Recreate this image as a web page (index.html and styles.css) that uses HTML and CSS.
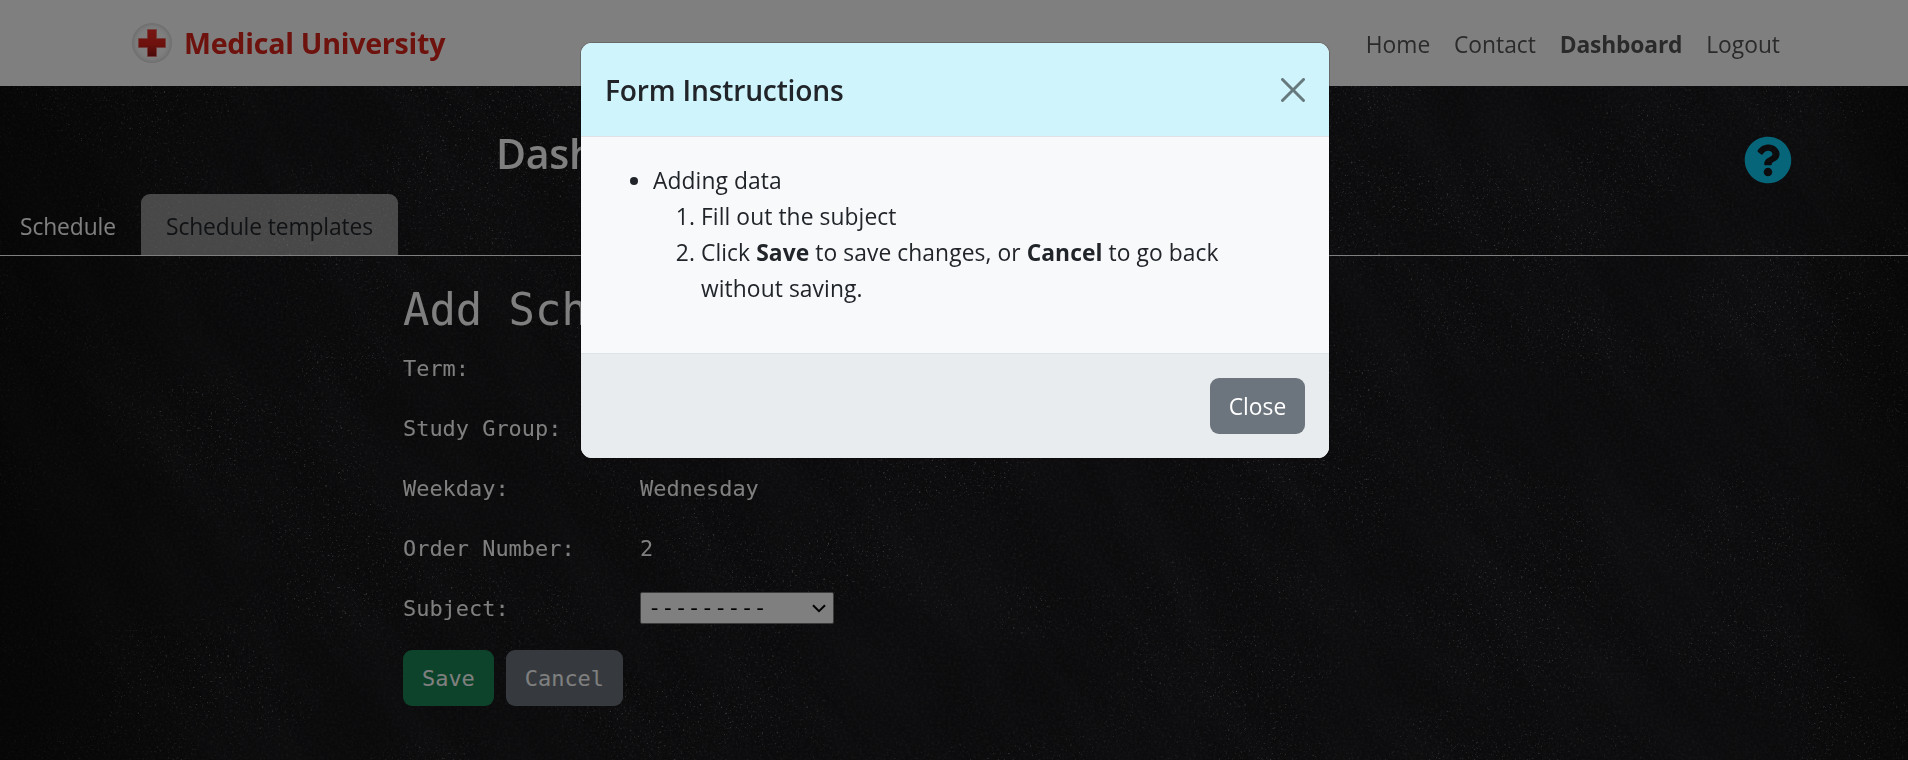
FILE: index.html
```
<!DOCTYPE html>
<html lang="en">
<head>
<meta charset="utf-8">
<title>Medical University</title>
<link rel="stylesheet" href="styles.css">
</head>
<body>
<svg class="chalkboard" width="1908" height="760" aria-hidden="true">
  <filter id="specks" x="0" y="0" width="100%" height="100%" color-interpolation-filters="sRGB">
    <feTurbulence type="fractalNoise" baseFrequency="0.47" numOctaves="3" seed="7" result="fine"/>
    <feColorMatrix in="fine" values="0 0 0 0 .75  0 0 0 0 .75  0 0 0 0 .78  4 0 0 0 -2.6" result="dots"/>
    <feTurbulence type="fractalNoise" baseFrequency="0.005 0.008" numOctaves="3" seed="12"/>
    <feColorMatrix values="0 0 0 0 1  0 0 0 0 1  0 0 0 0 1  3 0 0 0 -.9"/>
    <feComposite in="dots" operator="in"/>
  </filter>
  <filter id="grain" x="0" y="0" width="100%" height="100%" color-interpolation-filters="sRGB">
    <feTurbulence type="fractalNoise" baseFrequency="0.37" numOctaves="2" seed="3"/>
    <feColorMatrix values="0 0 0 0 .6  0 0 0 0 .6  0 0 0 0 .64  .5 0 0 0 -.19"/>
  </filter>
  <filter id="smudge" x="0" y="0" width="100%" height="100%" color-interpolation-filters="sRGB">
    <feTurbulence type="fractalNoise" baseFrequency="0.005 0.02" numOctaves="5" seed="21"/>
    <feColorMatrix values="0 0 0 0 .7  0 0 0 0 .7  0 0 0 0 .75  .35 0 0 0 -.12"/>
  </filter>
  <linearGradient id="edges"><stop offset="0" stop-opacity=".45"/><stop offset=".12" stop-opacity=".1"/><stop offset=".5" stop-opacity="0"/><stop offset=".94" stop-opacity="0"/><stop offset="1" stop-opacity=".35"/></linearGradient>
  <rect width="1908" height="760" filter="url(#grain)" opacity=".45"/>
  <rect width="1908" height="760" filter="url(#specks)" opacity=".6"/>
  <g transform="rotate(55 1400 380)"><rect x="300" y="-900" width="2000" height="2500" filter="url(#smudge)" opacity=".25"/></g>
  <rect width="1908" height="760" fill="url(#edges)"/>
</svg>
<div class="page">
  <nav class="navbar">
    <a class="brand">
      <svg class="logo" viewBox="0 0 40 40">
        <defs>
          <radialGradient id="disc"><stop offset=".6" stop-color="#fff" stop-opacity=".15"/><stop offset=".85" stop-color="#f2f2f2"/><stop offset="1" stop-color="#dcdcdc"/></radialGradient>
          <linearGradient id="cross" x2="0" y2="1"><stop offset="0" stop-color="#f02c28"/><stop offset=".55" stop-color="#dc241c"/><stop offset="1" stop-color="#901410"/></linearGradient>
        </defs>
        <circle cx="20" cy="20" r="20" fill="url(#disc)"/>
        <path d="M15.5 6.5h9v9h9v9h-9v9h-9v-9h-9v-9h9z" fill="url(#cross)" stroke="#e8756f" stroke-width=".7"/>
      </svg>
      <span class="brand-name">Medical University</span>
    </a>
    <div class="links">
      <a>Home</a><a>Contact</a><a class="current">Dashboard</a><a>Logout</a>
    </div>
  </nav>
  <header class="heading">
    <h2>Dashboard</h2>
    <svg class="help" viewBox="0 0 512 512"><path d="M504 256c0 136.997-111.043 248-248 248S8 392.997 8 256C8 119.083 119.043 8 256 8s248 111.083 248 248zM262.655 90c-54.497 0-89.255 22.957-116.549 63.758-3.536 5.286-2.353 12.415 2.715 16.258l34.699 26.31c5.205 3.947 12.621 3.008 16.665-2.122 17.864-22.658 30.113-35.797 57.303-35.797 20.429 0 45.698 13.148 45.698 32.958 0 14.976-12.363 22.667-32.534 33.976C247.128 238.528 216 254.941 216 296v4c0 6.627 5.373 12 12 12h56c6.627 0 12-5.373 12-12v-1.333c0-28.462 83.186-29.647 83.186-106.667 0-58.002-60.165-102-116.531-102zM256 338c-25.365 0-46 20.635-46 46 0 25.364 20.635 46 46 46s46-20.636 46-46c0-25.364-20.635-46-46-46z"/></svg>
  </header>
  <div class="tabs">
    <a class="tab">Schedule</a>
    <a class="tab active">Schedule templates</a>
  </div>
  <main class="form">
    <h1>Add Schedule</h1>
    <div class="row"><span>Term:</span></div>
    <div class="row"><span>Study Group:</span></div>
    <div class="row"><span>Weekday:</span><span>Wednesday</span></div>
    <div class="row"><span>Order Number:</span><span>2</span></div>
    <div class="row"><span>Subject:</span>
      <div class="select"><span>---------</span><svg viewBox="0 0 14 9"><path d="M1 1.2l6 6 6-6"/></svg></div>
    </div>
    <div class="actions"><button class="btn save">Save</button><button class="btn secondary">Cancel</button></div>
  </main>
</div>
<div class="backdrop">
  <section class="modal">
    <div class="modal-header">
      <h5>Form Instructions</h5>
      <svg class="close" viewBox="0 0 16 16"><path d="M.293.293a1 1 0 011.414 0L8 6.586 14.293.293a1 1 0 111.414 1.414L9.414 8l6.293 6.293a1 1 0 01-1.414 1.414L8 9.414l-6.293 6.293a1 1 0 01-1.414-1.414L6.586 8 .293 1.707a1 1 0 010-1.414z"/></svg>
    </div>
    <div class="modal-body">
      <ul>
        <li>Adding data
          <ol>
            <li>Fill out the subject</li>
            <li>Click <b>Save</b> to save changes, or <b>Cancel</b> to go back<br>without saving.</li>
          </ol>
        </li>
      </ul>
    </div>
    <div class="modal-footer"><button class="btn secondary">Close</button></div>
  </section>
</div>
</body>
</html>
```
FILE: styles.css
```
* { box-sizing: border-box; }
body {
  margin: 0;
  height: 760px;
  overflow: hidden;
  background: #161619;
  font: 22.8px/36px "Open Sans", "Noto Sans", sans-serif;
  color: #212529;
}
h1, h2, h5, ul, ol { margin: 0; }
.chalkboard { position: fixed; inset: 0; }
.page { position: relative; height: 760px; }

.navbar {
  height: 86px;
  padding: 0 128px 0 132px;
  display: flex;
  align-items: center;
  justify-content: space-between;
  background: #fff;
}
.brand { display: flex; align-items: center; gap: 12px; }
.logo { width: 40px; height: 40px; }
.brand-name { font-size: 28.6px; font-weight: 700; color: #dc241c; letter-spacing: -.25px; }
.links { display: flex; gap: 23.8px; color: #555; padding-top: 3px; }
.current { font-weight: 700; letter-spacing: -.15px; }

.heading {
  height: 108px;
  padding: 50px 116px 0 496px;
  display: flex;
  justify-content: space-between;
}
.heading h2 { font-size: 41px; line-height: 40px; font-weight: 600; color: #fff; margin-top: -3px; letter-spacing: -.3px; }
.help { width: 48px; height: 48px; fill: #0dcaf0; }

.tabs { display: flex; height: 62px; border-bottom: 1px solid #fff; }
.tab { width: 141px; padding: 15px 0 0 20px; color: #fff; letter-spacing: -.1px; }
.active {
  width: 257px;
  padding-left: 25px;
  color: #212529;
  background: rgba(255, 255, 255, .53);
  border-radius: 9px 9px 0 0;
}

.form { padding: 23px 0 0 403px; font: 21.93px/36px "DejaVu Sans Mono", monospace; color: #fff; }
.form h1 { font-size: 43.85px; line-height: 62px; font-weight: 400; height: 60px; }
.form .row { display: grid; grid-template-columns: 237px auto; align-items: center; height: 60px; justify-content: start; }
.select {
  width: 194px;
  height: 32px;
  margin-top: -2px;
  padding: 0 7px 0 7px;
  display: flex;
  align-items: center;
  justify-content: space-between;
  background: #fff;
  border: 1px solid #767676;
  border-radius: 2px;
  color: #000;
}
.select svg { width: 14px; height: 9px; fill: none; stroke: #000; stroke-width: 2; }
.actions { display: flex; gap: 12px; padding-top: 11px; }
.btn {
  height: 56px;
  padding: 2px 19px 0;
  border: 0;
  border-radius: 9px;
  color: #fff;
  font: inherit;
}
.save { background: #198754; }
.secondary { background: #6c757d; }

.backdrop { position: fixed; inset: 0; background: rgba(0, 0, 0, .5); padding-top: 43px; }
.modal {
  width: 748px;
  height: 415px;
  margin: 0 auto 0 581px;
  border-radius: 11px;
  overflow: hidden;
  display: flex;
  flex-direction: column;
  background: #f8f9fb;
  box-shadow: 0 0 0 1px rgba(0, 0, 0, .18);
}
.modal-header {
  height: 94px;
  padding: 0 24px;
  display: flex;
  align-items: center;
  justify-content: space-between;
  background: #cff4fc;
  border-bottom: 1px solid #dee2e6;
}
.modal-header h5 { font-size: 28.2px; font-weight: 600; letter-spacing: -.2px; padding-top: 1px; }
.close { width: 24px; height: 24px; opacity: .5; }
.modal-body { flex: 1; padding: 26px 24px 24px; letter-spacing: .08px; }
.modal-body ul { padding-left: 48px; }
.modal-body ol { padding-left: 48px; }
.modal-footer {
  height: 105px;
  padding: 0 24px;
  display: flex;
  align-items: center;
  justify-content: flex-end;
  background: #e9ecef;
  border-top: 1px solid #dee2e6;
}
.modal-footer .btn { width: 95px; padding: 2px 0 0; }
```
